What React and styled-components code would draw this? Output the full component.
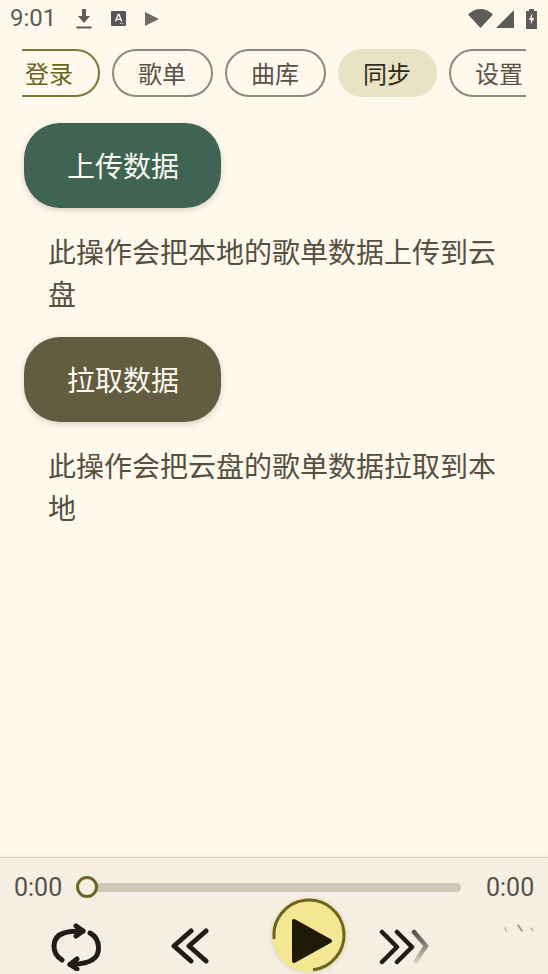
import React from 'react'
import styled, { createGlobalStyle } from 'styled-components'

const GlobalStyle = createGlobalStyle`
  html, body {
    margin: 0;
    padding: 0;
    background: #fff8ec;
  }
  body {
    font-family: "Noto Sans CJK SC", "Noto Sans", sans-serif;
  }
`

const Page = styled.div`
  width: 548px;
  height: 974px;
  display: flex;
  flex-direction: column;
  overflow: hidden;
  background: #fff8ec;
`

const StatusBar = styled.div`
  height: 37px;
  padding: 0 11px 0 10px;
  display: flex;
  align-items: center;
  color: #5c5c5a;
  svg {
    display: block;
  }
`

const Time = styled.span`
  font-family: Roboto, sans-serif;
  font-size: 24px;
  line-height: 37px;
  width: 66px;
`

const StatusLeft = styled.div`
  display: flex;
  align-items: center;
  gap: 19px;
`

const StatusRight = styled.div`
  margin-left: auto;
  display: flex;
  align-items: center;
  gap: 3px;
`

const ChipScroller = styled.div`
  margin: 12px 22px 0;
  overflow: hidden;
`

const ChipRow = styled.div`
  display: flex;
  gap: 12px;
  margin-left: -23px;
  width: max-content;
`

const Chip = styled.div`
  box-sizing: border-box;
  width: ${(p) => (p.$active ? '99px' : '101px')};
  height: 48px;
  padding-right: 1px;
  border-radius: 24px;
  display: flex;
  align-items: center;
  justify-content: center;
  font-size: 24px;
  line-height: 1;
  color: ${(p) => (p.$accent ? '#6b6520' : p.$active ? '#2f2c1e' : '#57534a')};
  background: ${(p) => (p.$active ? '#e9e3c3' : 'transparent')};
  border: ${(p) =>
    p.$active ? 'none' : `2px solid ${p.$accent ? '#7d7738' : '#8d8880'}`};
`

const Content = styled.main`
  flex: 1;
  padding: 26px 24px 0;
`

const ActionButton = styled.div`
  box-sizing: border-box;
  width: 197px;
  height: 84.500px;
  padding-left: 1px;
  border-radius: 36px;
  display: flex;
  align-items: center;
  justify-content: center;
  font-size: 28px;
  color: #fdfaf0;
  background: ${(p) => p.$bg};
  box-shadow: 0 2px 6px rgba(60, 50, 30, 0.2);
`

const Desc = styled.p`
  margin: 22px 0 23.500px;
  padding: 0 14px 0 24px;
  font-size: 28px;
  line-height: 42px;
  color: #55503f;
`

const Player = styled.footer`
  position: relative;
  box-sizing: border-box;
  height: 117px;
  border-top: 1.500px solid #d8d2c4;
  background: #f5efe3;
  box-shadow: 0 -1px 2px rgba(80, 70, 50, 0.08);
  overflow: hidden;
`

const SeekRow = styled.div`
  height: 58px;
  padding: 0 14px;
  display: flex;
  align-items: center;
  gap: 14px;
`

const TimeLabel = styled.span`
  font-family: Roboto, sans-serif;
  font-size: 25px;
  width: 48px;
  white-space: nowrap;
  color: #55524a;
`

const Slider = styled.div`
  flex: 1;
  position: relative;
  height: 22px;
  display: flex;
  align-items: center;
  padding: 0 11px;
`

const Track = styled.div`
  flex: 1;
  height: 9px;
  border-radius: 5px;
  background: #cec8b6;
`

const Thumb = styled.div`
  position: absolute;
  left: 0;
  top: 0;
  box-sizing: border-box;
  width: 22px;
  height: 22px;
  border-radius: 50%;
  border: 3.500px solid #6b6520;
  background: #f5efe3;
`

const Controls = styled.div`
  display: flex;
  align-items: flex-start;
  height: 76px;
  margin-top: -18px;
  padding-left: 50px;
`

const IconSlot = styled.div`
  margin-left: ${(p) => p.$left || 0}px;
  margin-top: ${(p) => p.$top || 0}px;
  display: flex;
  svg {
    display: block;
  }
`

const PlayButton = styled.div`
  position: relative;
  flex: none;
  margin-left: ${(p) => p.$left}px;
  width: 74px;
  height: 74px;
  border-radius: 50%;
  background: #f3e793;
  box-shadow: 0 1px 4px rgba(80, 70, 30, 0.18);
  display: flex;
  align-items: center;
  justify-content: center;
`

const Ring = styled.svg`
  position: absolute;
  inset: 0;
`

const Smudge = styled.svg`
  position: absolute;
  right: 12px;
  bottom: 38px;
`

const DownloadIcon = () => (
  <svg width="16" height="20" viewBox="0 0 16 20">
    <path d="M6 0h4v7h4l-6 7-6-7h4z" fill="currentColor" />
    <rect x="0.5" y="17.5" width="15" height="2" fill="currentColor" />
  </svg>
)

const FontIcon = () => (
  <svg width="15" height="15" viewBox="0 0 15 15">
    <rect width="15" height="15" rx="1" fill="#55555a" />
    <path d="M4.5 10.5 7.2 3.5h.8l2.7 7M5.6 8.3h4" stroke="#fff" strokeWidth="1.3" fill="none" />
    <path d="M9 12.5h3.5" stroke="#ddd" strokeWidth="1" strokeDasharray="1 .6" />
  </svg>
)

const StatusPlayIcon = () => (
  <svg width="14" height="14" viewBox="0 0 14 14">
    <path d="M0 0 14 7 0 14z" fill="#6b6b68" />
  </svg>
)

const WifiIcon = () => (
  <svg width="25" height="19" viewBox="0 0 25 19">
    <path d="M0 5.5C3.5 2 8 0 12.5 0S21.500 2 25 5.500L12.500 19z" fill="currentColor" />
  </svg>
)

const SignalIcon = () => (
  <svg width="18" height="18" viewBox="0 0 18 18">
    <path d="M18 0v18H0z" fill="currentColor" />
  </svg>
)

const BatteryIcon = () => (
  <svg width="11" height="20" viewBox="0 0 11 20" style={{ marginLeft: 9 }}>
    <path d="M3 0h5v2h3v18H0V2h3z" fill="#5c5c5a" />
    <path d="M6.500 4 2.800 11h2.500l-.8 5 3.700-7H5.700z" fill="#fff8ec" />
  </svg>
)

const RepeatIcon = () => (
  <svg width="52" height="48" viewBox="0 0 52 48" fill="none" stroke="#1f1d18" strokeWidth="5" strokeLinecap="round" strokeLinejoin="round">
    <path d="M12 37C1 30 1 14 14 10 18 8.500 26 8 33 8" />
    <path d="M26 3l7 5-7 5" />
    <path d="M40 10C51 16 51 32 42 37 36 41 28 41 20 41.500" />
    <path d="M27 36l-7 5.500 7 4.500" />
  </svg>
)

const BackIcon = () => (
  <svg width="38" height="36" viewBox="0 0 38 36" fill="none" stroke="#1f1d18" strokeWidth="5" strokeLinecap="round" strokeLinejoin="round">
    <path d="M20 3 3 18l17 15" />
    <path d="M35 3 18 18l17 15" />
  </svg>
)

const ForwardIcon = () => (
  <svg width="50" height="36" viewBox="0 0 50 36" fill="none" strokeLinecap="round" strokeLinejoin="round">
    <defs>
      <linearGradient id="fade" x1="0" y1="0" x2="0" y2="1">
        <stop offset="0" stopColor="#55534c" />
        <stop offset="0.5" stopColor="#8d8a80" />
        <stop offset="1" stopColor="#d0ccc0" />
      </linearGradient>
    </defs>
    <path d="M35 3 47 17 37 32" stroke="url(#fade)" strokeWidth="4.500" />
    <path d="M18 3 33 18 18 33" stroke="#1f1d18" strokeWidth="4.500" />
    <path d="M3 3 18 18 3 33" stroke="#1f1d18" strokeWidth="4.500" />
  </svg>
)

const PlayGlyph = () => (
  <svg width="42" height="46" viewBox="0 0 42 46" style={{ margin: '12px 0 0 6px' }}>
    <path d="M3 3 39 23 3 43z" fill="#1f1a05" stroke="#1f1a05" strokeWidth="4" strokeLinejoin="round" />
  </svg>
)

const chips = [
  { label: '登录', accent: true },
  { label: '歌单' },
  { label: '曲库' },
  { label: '同步', active: true },
  { label: '设置' },
]

const actions = [
  { label: '上传数据', bg: '#3f6453', desc: '此操作会把本地的歌单数据上传到云盘' },
  { label: '拉取数据', bg: '#625c40', desc: '此操作会把云盘的歌单数据拉取到本地' },
]

export default function App() {
  return (
    <Page>
      <GlobalStyle />
      <StatusBar>
        <Time>9:01</Time>
        <StatusLeft>
          <DownloadIcon />
          <FontIcon />
          <StatusPlayIcon />
        </StatusLeft>
        <StatusRight>
          <WifiIcon />
          <SignalIcon />
          <BatteryIcon />
        </StatusRight>
      </StatusBar>

      <ChipScroller>
        <ChipRow>
          {chips.map((chip) => (
            <Chip key={chip.label} $accent={chip.accent} $active={chip.active}>
              {chip.label}
            </Chip>
          ))}
        </ChipRow>
      </ChipScroller>

      <Content>
        {actions.map((action) => (
          <div key={action.label}>
            <ActionButton $bg={action.bg}>{action.label}</ActionButton>
            <Desc>{action.desc}</Desc>
          </div>
        ))}
      </Content>

      <Player>
        <SeekRow>
          <TimeLabel>0:00</TimeLabel>
          <Slider>
            <Track />
            <Thumb />
          </Slider>
          <TimeLabel>0:00</TimeLabel>
        </SeekRow>
        <Controls>
          <IconSlot $top={25}>
            <RepeatIcon />
          </IconSlot>
          <IconSlot $left={69} $top={30}>
            <BackIcon />
          </IconSlot>
          <PlayButton $left={63}>
            <Ring width="74" height="74" viewBox="0 0 74 74" fill="none" stroke="#6b6520" strokeWidth="3">
              <path d="M2.200 41A35 35 0 1 1 41 71.800" />
            </Ring>
            <PlayGlyph />
          </PlayButton>
          <IconSlot $left={33} $top={31}>
            <ForwardIcon />
          </IconSlot>
        </Controls>
        <Smudge width="34" height="14" viewBox="0 0 34 14" fill="none" stroke="#b9b5a8" strokeWidth="1.500" strokeLinecap="round">
          <path d="M3 6l1 3M29 6l2 3" />
          <path d="M16 3l4 6" stroke="#8f8b80" />
        </Smudge>
      </Player>
    </Page>
  )
}
